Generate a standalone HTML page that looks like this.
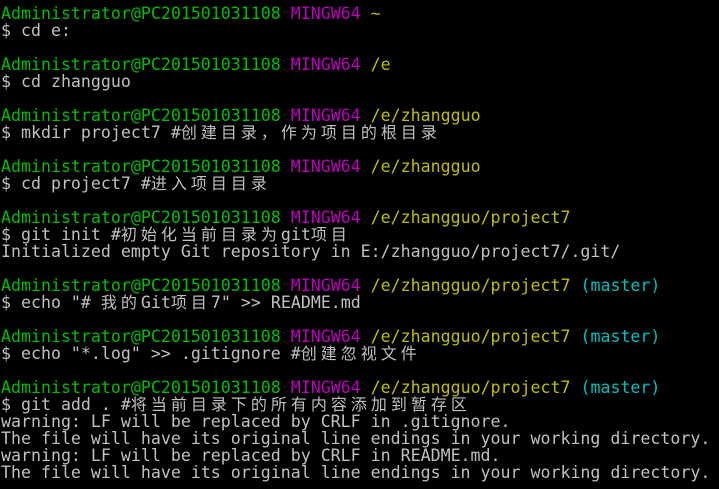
<!DOCTYPE html>
<html><head><meta charset="utf-8"><style>
html,body{margin:0;padding:0;background:#000;width:719px;height:489px;overflow:hidden}
.t{padding:5px 0 0 1px;font-family:"DejaVu Sans Mono","Noto Sans CJK SC",monospace;font-size:16.6px;color:#c0c0c0}
.t div{height:17px;line-height:17px;overflow:visible;white-space:pre}
.g{color:#00bf00}.p{color:#bf00bf}.y{color:#bfbf00}.c{color:#00bfbf}
.z{font-family:"Noto Sans CJK SC",sans-serif;font-size:16px;letter-spacing:4px;line-height:10px}
</style></head><body><div class="t">
<div><span class="g">Administrator@PC201501031108</span> <span class="p">MINGW64</span> <span class="y">~</span></div>
<div>$ cd e:</div>
<div></div>
<div><span class="g">Administrator@PC201501031108</span> <span class="p">MINGW64</span> <span class="y">/e</span></div>
<div>$ cd zhangguo</div>
<div></div>
<div><span class="g">Administrator@PC201501031108</span> <span class="p">MINGW64</span> <span class="y">/e/zhangguo</span></div>
<div>$ mkdir project7 #<span class="z">创建目录，作为项目的根目录</span></div>
<div></div>
<div><span class="g">Administrator@PC201501031108</span> <span class="p">MINGW64</span> <span class="y">/e/zhangguo</span></div>
<div>$ cd project7 #<span class="z">进入项目目录</span></div>
<div></div>
<div><span class="g">Administrator@PC201501031108</span> <span class="p">MINGW64</span> <span class="y">/e/zhangguo/project7</span></div>
<div>$ git init #<span class="z">初始化当前目录为</span>git<span class="z">项目</span></div>
<div>Initialized empty Git repository in E:/zhangguo/project7/.git/</div>
<div></div>
<div><span class="g">Administrator@PC201501031108</span> <span class="p">MINGW64</span> <span class="y">/e/zhangguo/project7</span> <span class="c">(master)</span></div>
<div>$ echo "# <span class="z">我的</span>Git<span class="z">项目</span>7" &gt;&gt; README.md</div>
<div></div>
<div><span class="g">Administrator@PC201501031108</span> <span class="p">MINGW64</span> <span class="y">/e/zhangguo/project7</span> <span class="c">(master)</span></div>
<div>$ echo "*.log" &gt;&gt; .gitignore #<span class="z">创建忽视文件</span></div>
<div></div>
<div><span class="g">Administrator@PC201501031108</span> <span class="p">MINGW64</span> <span class="y">/e/zhangguo/project7</span> <span class="c">(master)</span></div>
<div>$ git add . #<span class="z">将当前目录下的所有内容添加到暂存区</span></div>
<div>warning: LF will be replaced by CRLF in .gitignore.</div>
<div>The file will have its original line endings in your working directory.</div>
<div>warning: LF will be replaced by CRLF in README.md.</div>
<div>The file will have its original line endings in your working directory.</div>
</div></body></html>
